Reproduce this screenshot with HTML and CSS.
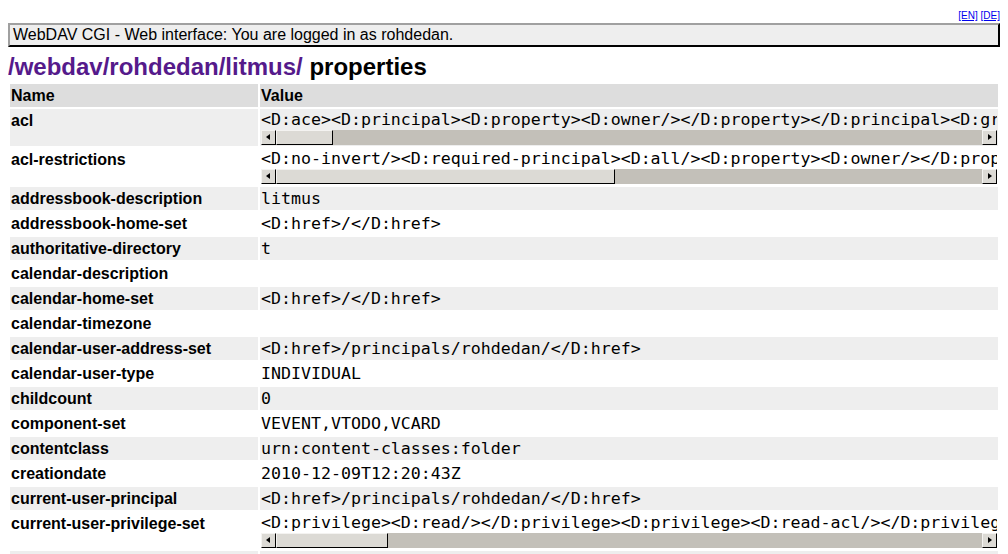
FILE: index.html
```html
<!DOCTYPE html>
<html>
<head>
<meta charset="utf-8">
<title>WebDAV CGI - properties</title>
<link rel="stylesheet" href="styles.css">
</head>
<body>
<div class="langs"><a href="#">[EN]</a> <a href="#">[DE]</a></div>
<div class="bar">WebDAV CGI - Web interface: You are logged in as rohdedan.</div>
<h1 class="title"><a class="path" href="#">/webdav/rohdedan/litmus/</a> properties</h1>
<table class="props">
  <colgroup><col class="c-name"><col class="c-value"></colgroup>
  <thead>
    <tr><th>Name</th><th>Value</th></tr>
  </thead>
  <tbody>
    <tr class="odd"><td class="name">acl</td><td class="value"><div class="scroller"><div class="code">&lt;D:ace&gt;&lt;D:principal&gt;&lt;D:property&gt;&lt;D:owner/&gt;&lt;/D:property&gt;&lt;/D:principal&gt;&lt;D:grant&gt;&lt;D:privilege&gt;&lt;D:all/&gt;&lt;/D:privilege&gt;&lt;/D:grant&gt;&lt;/D:ace&gt;</div></div><div class="sbar"><span class="btn left"></span><span class="track"><span class="thumb" style="width:57px"></span></span><span class="btn right"></span></div></td></tr>
    <tr><td class="name">acl-restrictions</td><td class="value"><div class="scroller"><div class="code">&lt;D:no-invert/&gt;&lt;D:required-principal&gt;&lt;D:all/&gt;&lt;D:property&gt;&lt;D:owner/&gt;&lt;/D:property&gt;&lt;/D:required-principal&gt;</div></div><div class="sbar"><span class="btn left"></span><span class="track"><span class="thumb" style="width:339px"></span></span><span class="btn right"></span></div></td></tr>
    <tr class="odd"><td class="name">addressbook-description</td><td class="value code">litmus</td></tr>
    <tr><td class="name">addressbook-home-set</td><td class="value code">&lt;D:href&gt;/&lt;/D:href&gt;</td></tr>
    <tr class="odd"><td class="name">authoritative-directory</td><td class="value code">t</td></tr>
    <tr><td class="name">calendar-description</td><td class="value code"></td></tr>
    <tr class="odd"><td class="name">calendar-home-set</td><td class="value code">&lt;D:href&gt;/&lt;/D:href&gt;</td></tr>
    <tr><td class="name">calendar-timezone</td><td class="value code"></td></tr>
    <tr class="odd"><td class="name">calendar-user-address-set</td><td class="value code">&lt;D:href&gt;/principals/rohdedan/&lt;/D:href&gt;</td></tr>
    <tr><td class="name">calendar-user-type</td><td class="value code">INDIVIDUAL</td></tr>
    <tr class="odd"><td class="name">childcount</td><td class="value code">0</td></tr>
    <tr><td class="name">component-set</td><td class="value code">VEVENT,VTODO,VCARD</td></tr>
    <tr class="odd"><td class="name">contentclass</td><td class="value code">urn:content-classes:folder</td></tr>
    <tr><td class="name">creationdate</td><td class="value code">2010-12-09T12:20:43Z</td></tr>
    <tr class="odd"><td class="name">current-user-principal</td><td class="value code">&lt;D:href&gt;/principals/rohdedan/&lt;/D:href&gt;</td></tr>
    <tr><td class="name">current-user-privilege-set</td><td class="value"><div class="scroller"><div class="code">&lt;D:privilege&gt;&lt;D:read/&gt;&lt;/D:privilege&gt;&lt;D:privilege&gt;&lt;D:read-acl/&gt;&lt;/D:privilege&gt;&lt;D:privilege&gt;&lt;D:read-current-user-privilege-set/&gt;&lt;/D:privilege&gt;</div></div><div class="sbar"><span class="btn left"></span><span class="track"><span class="thumb" style="width:112px"></span></span><span class="btn right"></span></div></td></tr>
    <tr class="odd"><td class="name">displayname</td><td class="value code">litmus</td></tr>
  </tbody>
</table>
</body>
</html>
```
FILE: styles.css
```css
html, body {
  background: #fff;
}
body {
  margin: 8px;
  font-family: "Liberation Sans", Arial, sans-serif;
  font-size: 16px;
  color: #000;
}
.langs {
  text-align: right;
  font-size: 10px;
  line-height: 15px;
  height: 15px;
}
.langs a {
  color: #0000ee;
}
.bar {
  background: #eeeeee;
  border-style: solid;
  border-width: 2px;
  border-color: #a0a0a0 #000 #000 #a0a0a0;
  padding: 1px 3px;
  line-height: 18px;
}
.title {
  margin: 6px 0 1px;
  font-size: 24px;
  line-height: 28px;
  font-weight: bold;
}
.title .path {
  color: #551a8b;
  text-decoration: none;
}
.props {
  width: 100%;
  table-layout: fixed;
  border-collapse: separate;
  border-spacing: 2px;
}
.c-name { width: 248px; }
.props th {
  background: #dddddd;
  text-align: left;
  font-weight: bold;
  padding: 1px;
  line-height: 21px;
  vertical-align: top;
}
.props td {
  padding: 1px;
  line-height: 21px;
  vertical-align: top;
}
.props tr.odd td {
  background: #eeeeee;
}
.name {
  font-weight: bold;
  white-space: nowrap;
  overflow: hidden;
}
.code {
  font-family: "DejaVu Sans Mono", monospace;
  font-size: 16.6px;
  white-space: pre;
}
.value {
  overflow: hidden;
}
.scroller {
  overflow: hidden;
  line-height: 20px;
}
.sbar {
  display: flex;
  height: 15px;
  background: #c3c0b9;
}
.sbar .btn {
  flex: none;
  width: 13px;
  height: 13px;
  background: #dcdad5;
  border: 1px solid;
  border-color: #f4f3f1 #000 #000 #f4f3f1;
  position: relative;
}
.sbar .btn::after {
  content: "";
  position: absolute;
  top: 3px;
  width: 0;
  height: 0;
  border-top: 3px solid transparent;
  border-bottom: 3px solid transparent;
}
.sbar .btn.left::after {
  left: 4px;
  border-right: 4px solid #000;
}
.sbar .btn.right::after {
  left: 5px;
  border-left: 4px solid #000;
}
.sbar .track {
  flex: 1;
  display: flex;
}
.sbar .thumb {
  box-sizing: border-box;
  height: 15px;
  background: #dcdad5;
  border: 1px solid;
  border-color: #f4f3f1 #000 #000 #f4f3f1;
}
```
